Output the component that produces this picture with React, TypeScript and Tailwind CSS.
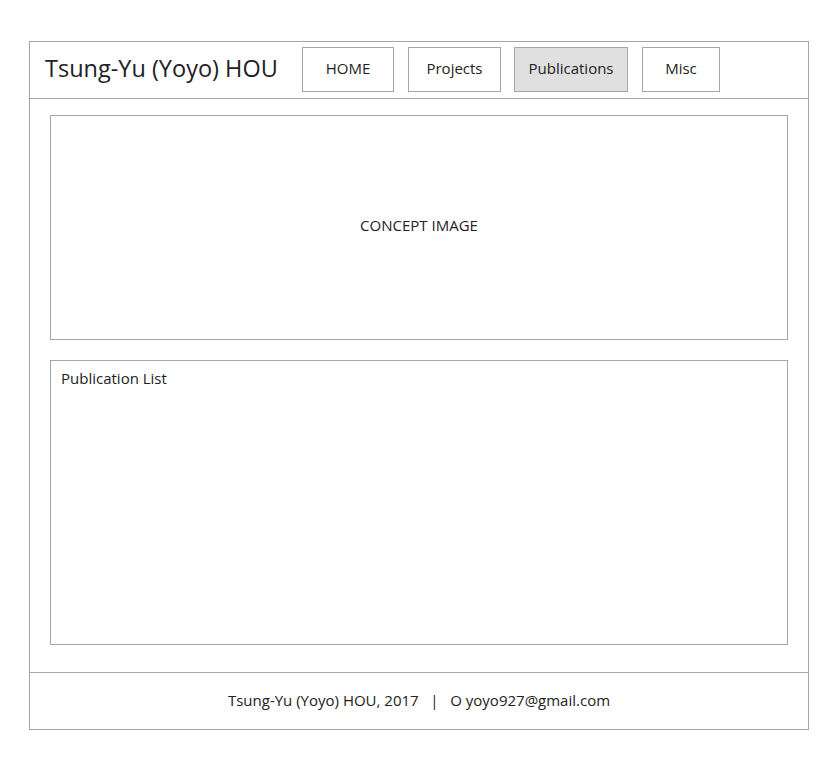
const navItems = [
  { label: "HOME", className: "w-[92px]", active: false },
  { label: "Projects", className: "ml-[14px] w-[93px]", active: false },
  { label: "Publications", className: "ml-[13px] w-[114px]", active: true },
  { label: "Misc", className: "ml-[14px] w-[78px]", active: false },
];

export default function App() {
  return (
    <div className="min-h-screen bg-white pt-[41px] pl-[29px] font-['Open_Sans',sans-serif] text-[#222]">
      <div className="w-[780px] border border-[#a6a6a6]">
        {/* Header */}
        <header className="flex h-[57px] items-center border-b border-[#a6a6a6] pl-[15px]">
          <h1 className="w-[257px] pb-[3px] text-[23.5px] leading-none">Tsung-Yu (Yoyo) HOU</h1>
          <nav className="flex pb-[1px]">
            {navItems.map((item) => (
              <div
                key={item.label}
                className={`flex h-[45px] items-center justify-center border border-[#a6a6a6] pb-[3px] text-[15px] ${item.className} ${
                  item.active ? "bg-[#e0e0e0]" : "bg-white"
                }`}
              >
                {item.label}
              </div>
            ))}
          </nav>
        </header>

        {/* Main */}
        <main className="flex flex-col gap-[20px] px-[20px] pt-[16px] pb-[27px]">
          <section className="flex h-[225px] items-center justify-center border border-[#a6a6a6] pb-[4px] text-[15px]">
            CONCEPT IMAGE
          </section>
          <section className="h-[285px] border border-[#a6a6a6] px-[10px] pt-[6px] text-[15px]">
            Publication List
          </section>
        </main>

        {/* Footer */}
        <footer className="flex h-[57px] items-center justify-center border-t border-[#a6a6a6] pb-[2px] text-[15px]">
          Tsung-Yu (Yoyo) HOU, 2017&nbsp;&nbsp;&nbsp;|&nbsp;&nbsp;&nbsp;O yoyo927@gmail.com
        </footer>
      </div>
    </div>
  );
}
